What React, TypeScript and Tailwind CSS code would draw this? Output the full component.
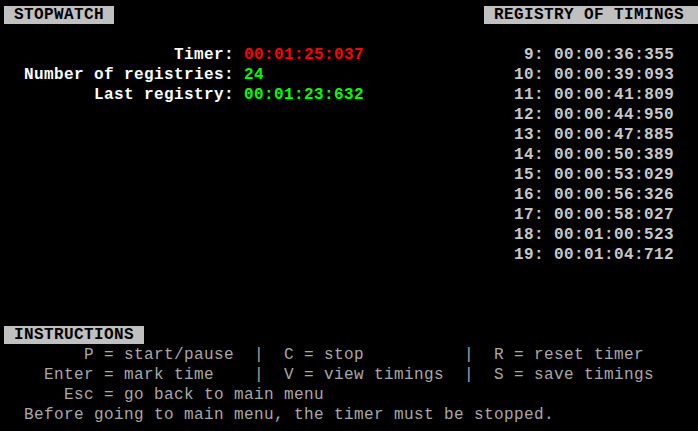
import React from "react";

const pad = (n: number) => " ".repeat(n);

const timings = [
  " 9: 00:00:36:355",
  "10: 00:00:39:093",
  "11: 00:00:41:809",
  "12: 00:00:44:950",
  "13: 00:00:47:885",
  "14: 00:00:50:389",
  "15: 00:00:53:029",
  "16: 00:00:56:326",
  "17: 00:00:58:027",
  "18: 00:01:00:523",
  "19: 00:01:04:712",
];

function Line({ children }: { children?: React.ReactNode }) {
  return <div className="h-[20px] leading-[20px] whitespace-pre">{children}</div>;
}

function Box({ children, extra = "" }: { children: React.ReactNode; extra?: string }) {
  return <span className={"bg-[#c0c0c0] text-black " + extra}>{children}</span>;
}

export default function App() {
  return (
    <div
      className="w-[698px] h-[431px] overflow-hidden bg-black pl-[4px] pt-[5px] text-[16px] tracking-[0.4px] font-bold text-[#c8c8c8]"
      style={{ fontFamily: '"Liberation Mono", "DejaVu Sans Mono", monospace' }}
    >
      <Line>
        <Box>{" STOPWATCH "}</Box>
        {pad(37)}
        <Box extra="pr-[4px]">{" REGISTRY OF TIMINGS "}</Box>
      </Line>
      <Line />
      <Line>
        <span className="text-white">{pad(17) + "Timer: "}</span>
        <span className="text-[#ff0000]">00:01:25:037</span>
        {pad(15)}
        {timings[0]}
      </Line>
      <Line>
        <span className="text-white">{pad(2) + "Number of registries: "}</span>
        <span className="text-[#00ff00]">24</span>
        {pad(25)}
        {timings[1]}
      </Line>
      <Line>
        <span className="text-white">{pad(9) + "Last registry: "}</span>
        <span className="text-[#00ff00]">00:01:23:632</span>
        {pad(15)}
        {timings[2]}
      </Line>
      {timings.slice(3).map((t) => (
        <Line key={t}>{pad(51) + t}</Line>
      ))}
      <Line />
      <Line />
      <Line />
      <Line>
        <Box>{" INSTRUCTIONS "}</Box>
      </Line>
      <div className="text-[#a8a8a8] font-normal">
        <Line>{pad(8) + "P = start/pause  |  C = stop          |  R = reset timer"}</Line>
        <Line>{pad(4) + "Enter = mark time    |  V = view timings  |  S = save timings"}</Line>
        <Line>{pad(6) + "Esc = go back to main menu"}</Line>
        <Line>{pad(2) + "Before going to main menu, the timer must be stopped."}</Line>
      </div>
    </div>
  );
}
